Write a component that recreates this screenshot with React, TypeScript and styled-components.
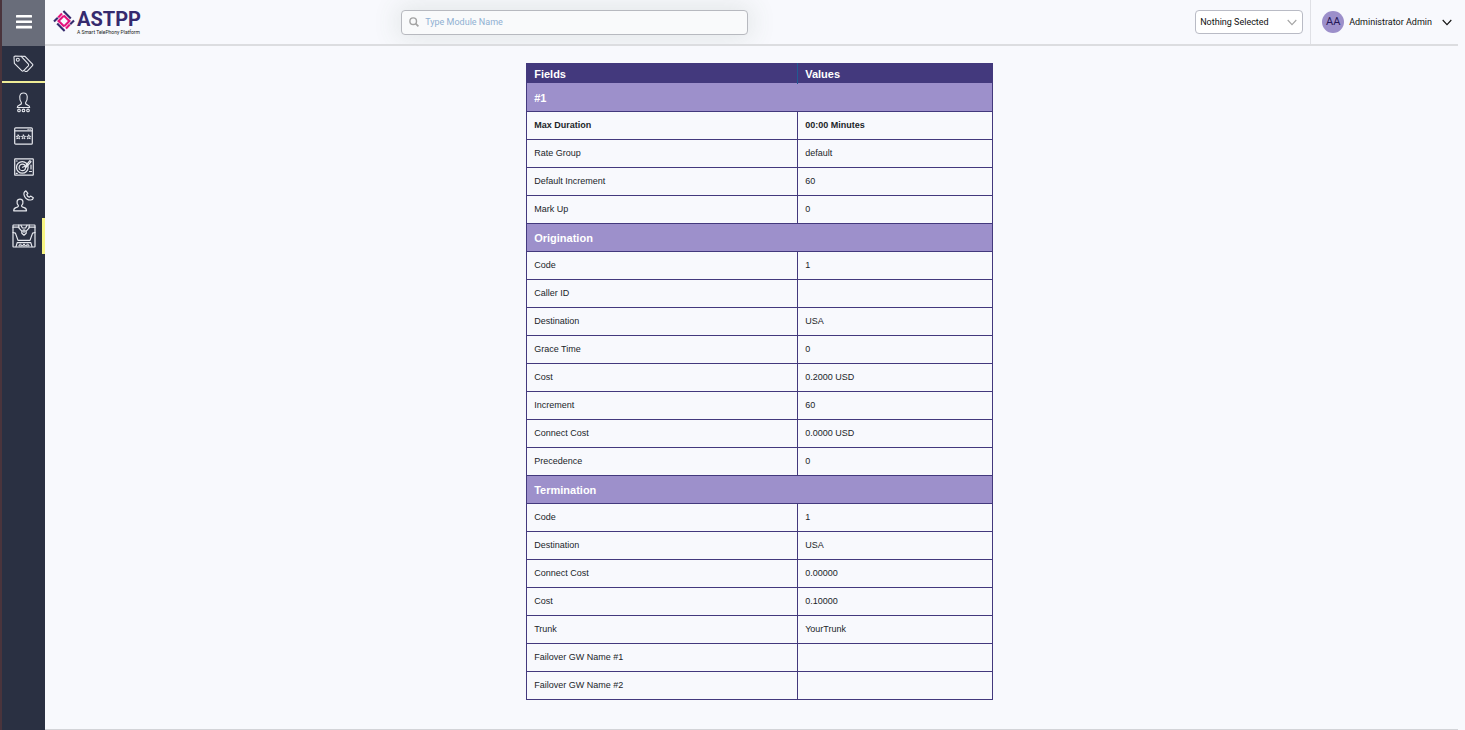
import React from "react";
import styled, { createGlobalStyle, css } from "styled-components";

const GlobalStyle = createGlobalStyle`
  *, *::before, *::after { box-sizing: border-box; }
  body {
    margin: 0;
    background: #f8f9fd;
    color: #212529;
    font-family: Roboto, "Liberation Sans", sans-serif;
    font-size: 9px;
  }
`;

const Page = styled.div`
  display: flex;
  min-height: 100vh;
`;

const Sidebar = styled.aside`
  flex: none;
  width: 45px;
  border-left: 2px solid #4a343c;
  background: #2a3042;
`;

const MenuButton = styled.button`
  display: flex;
  align-items: center;
  justify-content: center;
  width: 100%;
  height: 46px;
  padding: 0 0 2px;
  border: 0;
  background: #696d7a;
  color: #fff;
`;

const NavList = styled.nav`
  display: flex;
  flex-direction: column;
`;

const NavLink = styled.a<{ $height: number; $active?: boolean; $underlined?: boolean }>`
  display: flex;
  align-items: center;
  justify-content: center;
  height: ${(p) => p.$height}px;
  color: #e6e8ee;
  ${(p) => p.$underlined && css`border-bottom: 2px solid #efec96;`}
  ${(p) => p.$active && css`box-shadow: inset -3px 0 0 #f8f584;`}
`;

const Content = styled.div`
  flex: 1;
  display: flex;
  flex-direction: column;
  min-width: 0;
  margin-right: 7px;
  border-bottom: 1px solid #d3d4d8;
`;

const Header = styled.header`
  display: flex;
  align-items: center;
  height: 46px;
  border-bottom: 2px solid #dcdde0;
  overflow: hidden;
`;

const Brand = styled.a`
  flex: 0 0 25%;
  display: flex;
  align-items: center;
  gap: 2px;
  padding: 0 0 2px 8px;
  color: #352a6e;
  text-decoration: none;
`;

const BrandText = styled.span`
  display: flex;
  flex-direction: column;
`;

const BrandName = styled.span`
  font-size: 20px;
  font-weight: 700;
  line-height: 22px;
`;

const BrandTagline = styled.span`
  color: #222;
  font-size: 5px;
  line-height: 5px;
  white-space: nowrap;
`;

const SearchColumn = styled.div`
  flex: 0 0 25%;
  padding: 0 4px 0 3px;
`;

const SearchBox = styled.label`
  display: flex;
  align-items: center;
  gap: 6px;
  height: 25px;
  padding: 0 7px;
  border: 1px solid #b7b9bf;
  border-radius: 4px;
  background: #f9fafb;
  box-shadow: 0 0 26px 4px rgba(70, 100, 70, 0.12);
  color: #a3a3a3;
`;

const SearchInput = styled.input`
  flex: 1;
  min-width: 0;
  padding: 0;
  border: 0;
  outline: 0;
  background: transparent;
  color: #212529;
  font: inherit;

  &::placeholder { color: #8fb0d2; opacity: 1; }
`;

const Account = styled.div`
  display: flex;
  align-items: center;
  margin-left: auto;
`;

const SelectWrap = styled.div`
  display: grid;
  align-items: center;
  width: 108px;
  margin-right: 7px;

  > * { grid-area: 1 / 1; }
  > svg { justify-self: end; margin-right: 6px; color: #a5a5a5; pointer-events: none; }
`;

const Select = styled.select`
  width: 100%;
  height: 24px;
  padding: 0 4px;
  border: 1px solid #b9bbc5;
  border-radius: 4px;
  background: #fff;
  color: #111;
  font: inherit;
  appearance: none;
`;

const UserButton = styled.button`
  display: flex;
  align-items: center;
  height: 46px;
  padding: 0 6px 0 11px;
  border: 0;
  border-left: 1px solid #dfe0e5;
  background: transparent;
  color: #111;
  font: inherit;
`;

const Avatar = styled.span`
  width: 22px;
  height: 22px;
  margin-right: 5px;
  border-radius: 50%;
  background: #9c8fca;
  color: #241757;
  font-size: 11px;
  line-height: 22px;
  text-align: center;
`;

const UserName = styled.span`
  margin-right: 10px;
`;

const Main = styled.main`
  display: flex;
  justify-content: center;
  padding: 17px 0 24px 16px;
`;

const RateTable = styled.table`
  width: 33.4%;
  min-width: 300px;
  table-layout: fixed;
  border: 1px solid #43397d;
  border-collapse: collapse;
  font-family: "Liberation Sans", Arial, sans-serif;
`;

const ColumnHead = styled.th`
  height: 20px;
  padding: 0 7px;
  background: #43397d;
  color: #fff;
  font-size: 11px;
  line-height: 12px;
  text-align: left;

  &:first-child { width: 58.2%; border-right: 1px solid #225b93; }
`;

const SectionHead = styled.th`
  height: 28px;
  padding: 0 7px;
  border: 1px solid #43397d;
  background: #9d90cb;
  color: #fff;
  font-size: 11px;
  line-height: 12px;
  text-align: left;

  thead + tbody & { border-top-color: #9d90cb; }
`;

const Cell = styled.td<{ $strong?: boolean }>`
  height: 28px;
  padding: 0 7px 2px;
  border: 1px solid #43397d;
  font-weight: ${(p) => (p.$strong ? 700 : 400)};
  line-height: 12px;
`;

const ChevronDown = () => (
  <svg width="10" height="7" viewBox="0 0 10 7" fill="none" stroke="currentColor" strokeWidth="1.1" aria-hidden="true">
    <path d="M.7 1 5 5.6 9.3 1" />
  </svg>
);

const SearchIcon = () => (
  <svg width="10" height="10" viewBox="0 0 10 10" fill="none" stroke="currentColor" strokeWidth="1.4" aria-hidden="true">
    <circle cx="4.2" cy="4.2" r="3.3" />
    <path d="m6.7 6.7 2.7 2.7" strokeWidth="1.7" />
  </svg>
);

const MenuIcon = () => (
  <svg width="16" height="14" viewBox="0 0 16 14" fill="currentColor" aria-hidden="true">
    <rect y="0" width="16" height="2.6" rx=".5" />
    <rect y="5.4" width="16" height="2.6" rx=".5" />
    <rect y="10.8" width="16" height="2.6" rx=".5" />
  </svg>
);

const LogoMark = () => (
  <svg width="22" height="22" viewBox="0 0 22 22" fill="none" strokeWidth="2.1" aria-hidden="true">
    <g stroke="#352a6e">
      <path d="M10.4 1 17.8 8.4" />
      <path d="M11.6 21 4.2 13.6" />
      <path d="M1 11.6 4.8 7.8" />
      <path d="M21 10.4 17.2 14.2" />
    </g>
    <g stroke="#e6127d">
      <path d="M5.2 7.4 9 3.6" />
      <path d="M16.8 14.6 13 18.4" />
      <path d="M10.8 5.4 16.6 11.2" />
      <path d="M11.2 16.6 5.4 10.8" />
      <path d="M4.8 11.8 10.8 5.8" />
      <path d="M17.2 10.2 11.2 16.2" />
    </g>
  </svg>
);

const iconProps = {
  fill: "none",
  stroke: "currentColor",
  strokeLinejoin: "round" as const,
  strokeLinecap: "round" as const,
  "aria-hidden": true,
};

const TagsIcon = () => (
  <svg width="21" height="18" viewBox="0 0 21 18" strokeWidth="1.1" {...iconProps}>
    <path d="M1 2.2Q1 1 2.2 1L8 1.2 15.4 9.2Q16 10 15.3 10.8L10.4 15.8Q9.5 16.4 8.7 15.7L1.4 8.4Z" />
    <path d="M8 1.2 12 1.4 19.7 9.3Q20.2 10 19.5 10.7L14.1 16.3Q13 17 11.6 15.8" />
    <circle cx="4.8" cy="4.8" r="1.5" />
  </svg>
);

const AccountsIcon = () => (
  <svg width="15" height="21" viewBox="0 0 15 21" strokeWidth="1.1" {...iconProps}>
    <path d="M5.4 10.6C3.2 8 2.5 1 7.5 1s4.3 7 2.1 9.6c-.4 1.8.5 2 2.3 2.6 1.4.5 1.8 1 1.8 2.3H1.3c0-1.3.4-1.8 1.8-2.3 1.8-.6 2.7-.8 2.3-2.6Z" />
    <circle cx="3" cy="18.4" r="1.3" />
    <circle cx="7.5" cy="18.4" r="1.3" />
    <circle cx="12" cy="18.4" r="1.3" />
  </svg>
);

const StarsWindowIcon = () => (
  <svg width="19" height="18" viewBox="0 0 19 18" strokeWidth="1.2" {...iconProps}>
    <rect x=".7" y=".8" width="17.6" height="16.4" rx="1" />
    <path d="M1 3.8h17M14 2.3h.2M16 2.3h.2" />
    {[4.2, 9.5, 14.8].map((x) => (
      <path
        key={x}
        d={`M${x} 8l.6 1.3 1.4.1-1 1 .4 1.4-1.4-.7-1.4.7.4-1.4-1-1 1.4-.1Z`}
        strokeWidth="1"
      />
    ))}
  </svg>
);

const ServicesIcon = () => (
  <svg width="20" height="18" viewBox="0 0 20 18" strokeWidth="1.2" {...iconProps}>
    <rect x=".7" y=".8" width="18.6" height="16.4" rx=".5" />
    <circle cx="8.3" cy="9.4" r="5.8" />
    <circle cx="8.3" cy="9.4" r="3.2" />
    <path d="m8.5 9.2 3-1.2 4.4-5.4 1.2 1L12.4 9M17 7v4M15.5 13.5h2M2.2 3h1M2.2 15.4h1" />
  </svg>
);

const SupportIcon = () => (
  <svg width="21" height="22" viewBox="0 0 21 22" strokeWidth="1.2" {...iconProps}>
    <path d="M5.4 15.6C3.3 13.4 3.4 9.2 7 9.2s3.7 4.2 1.6 6.4c-.3 1.2.6 1.5 2.6 2 1.7.5 2.3 1.2 2.3 3.2H.7c0-2 .5-2.7 2.2-3.2 1.9-.5 2.8-.8 2.5-2Z" />
    <path d="M12.9.9c-2 .9-2.5 2.8-1.5 5 1.3 2.8 3.7 4.3 6.3 4.1 1.4-.1 2.4-.9 2.6-2.2l-2.7-1.7-1.4 1.1c-1.2-.4-2.1-1.4-2.4-2.7l1.1-1.2Z" />
  </svg>
);

const DevicesIcon = () => (
  <svg width="24" height="24" viewBox="0 0 24 24" strokeWidth="1.2" {...iconProps}>
    <rect x="1" y="1" width="22" height="22" rx=".4" />
    <path d="M1 3.2h6M17 3.2h6M1 8.5l2.4.6L6 16.4h12l2.6-7.3 2.4-.6" />
    <path d="M6.8 1.2v2.6l3 3.4v2l2.2 2 2.2-2v-2l3-3.4V1.2" />
    <path d="M9 1.4 10.4 4h3.2L15 1.4" />
    <circle cx="12" cy="7" r="1.2" />
    <path d="M5.2 18.6h13.6l1.2 4M5.2 18.6 4 22.6" />
    <path d="m7 21.6 1.4-1.8 1.4 1.8Zm3.6 0L12 19.8l1.4 1.8Zm3.6 0 1.4-1.8 1.4 1.8Z" strokeWidth="1" />
  </svg>
);

type NavEntry = {
  label: string;
  icon: React.ReactNode;
  height: number;
  active?: boolean;
  underlined?: boolean;
};

const navEntries: NavEntry[] = [
  { label: "Tariffs", icon: <TagsIcon />, height: 37, underlined: true },
  { label: "Accounts", icon: <AccountsIcon />, height: 38 },
  { label: "Billing", icon: <StarsWindowIcon />, height: 30 },
  { label: "Services", icon: <ServicesIcon />, height: 32 },
  { label: "Support", icon: <SupportIcon />, height: 35 },
  { label: "Devices", icon: <DevicesIcon />, height: 36, active: true },
];

const sections = [
  {
    title: "#1",
    rows: [
      ["Max Duration", "00:00 Minutes"],
      ["Rate Group", "default"],
      ["Default Increment", "60"],
      ["Mark Up", "0"],
    ],
  },
  {
    title: "Origination",
    rows: [
      ["Code", "1"],
      ["Caller ID", ""],
      ["Destination", "USA"],
      ["Grace Time", "0"],
      ["Cost", "0.2000 USD"],
      ["Increment", "60"],
      ["Connect Cost", "0.0000 USD"],
      ["Precedence", "0"],
    ],
  },
  {
    title: "Termination",
    rows: [
      ["Code", "1"],
      ["Destination", "USA"],
      ["Connect Cost", "0.00000"],
      ["Cost", "0.10000"],
      ["Trunk", "YourTrunk"],
      ["Failover GW Name #1", ""],
      ["Failover GW Name #2", ""],
    ],
  },
];

export default function App() {
  return (
    <Page>
      <GlobalStyle />
      <Sidebar>
        <MenuButton type="button" aria-label="Toggle menu">
          <MenuIcon />
        </MenuButton>
        <NavList>
          {navEntries.map((entry) => (
            <NavLink
              key={entry.label}
              href="#"
              aria-label={entry.label}
              $height={entry.height}
              $active={entry.active}
              $underlined={entry.underlined}
            >
              {entry.icon}
            </NavLink>
          ))}
        </NavList>
      </Sidebar>
      <Content>
        <Header>
          <Brand href="#">
            <LogoMark />
            <BrandText>
              <BrandName>ASTPP</BrandName>
              <BrandTagline>A Smart TelePhony Platform</BrandTagline>
            </BrandText>
          </Brand>
          <SearchColumn>
            <SearchBox>
              <SearchIcon />
              <SearchInput type="text" placeholder="Type Module Name" aria-label="Module name" />
            </SearchBox>
          </SearchColumn>
          <Account>
            <SelectWrap>
              <Select aria-label="Selection" defaultValue="">
                <option value="">Nothing Selected</option>
              </Select>
              <ChevronDown />
            </SelectWrap>
            <UserButton type="button">
              <Avatar>AA</Avatar>
              <UserName>Administrator Admin</UserName>
              <ChevronDown />
            </UserButton>
          </Account>
        </Header>
        <Main>
          <RateTable>
            <thead>
              <tr>
                <ColumnHead scope="col">Fields</ColumnHead>
                <ColumnHead scope="col">Values</ColumnHead>
              </tr>
            </thead>
            {sections.map((section, s) => (
              <tbody key={section.title}>
                <tr>
                  <SectionHead colSpan={2} scope="rowgroup">
                    {section.title}
                  </SectionHead>
                </tr>
                {section.rows.map(([field, value], r) => (
                  <tr key={field}>
                    <Cell $strong={s === 0 && r === 0}>{field}</Cell>
                    <Cell $strong={s === 0 && r === 0}>{value}</Cell>
                  </tr>
                ))}
              </tbody>
            ))}
          </RateTable>
        </Main>
      </Content>
    </Page>
  );
}
